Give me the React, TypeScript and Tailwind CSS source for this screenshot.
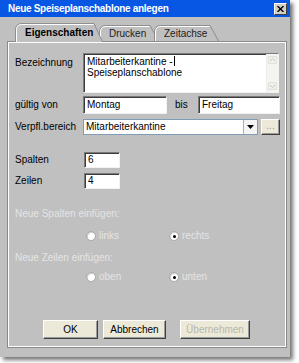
import React from "react";

function Tab({ label, width, selected, height }: { label: string; width: number; selected?: boolean; height: number }) {
  const w = width;
  const h = height;
  const d = `M0.5 ${h} L0.5 7 Q0.5 0.5 7 0.5 L${w - 9} 0.5 L${w - 0.5} ${h}`;
  const d2 = `M1.5 ${h} L1.5 7 Q1.5 1.5 7 1.5 L${w - 9.5} 1.5`;
  return (
    <div
      className={
        "relative shrink-0 flex items-center " +
        (selected ? "z-10 -mb-px font-bold text-black" : "text-[#222]")
      }
      style={{ width: w, height: h }}
    >
      <svg className="absolute inset-0" width={w} height={h} viewBox={`0 0 ${w} ${h}`}>
        <path d={d + " Z"} fill="#c0c0c0" stroke="none" />
        <path d={d} fill="none" stroke="#8e8e8e" strokeWidth="1" />
        <path d={d2} fill="none" stroke="#ffffff" strokeWidth="1" />
      </svg>
      <span className="relative pl-[10px] pt-[1px]">{label}</span>
    </div>
  );
}

function Radio({ checked, label }: { checked?: boolean; label: string }) {
  return (
    <div className="flex items-center gap-[3px] h-[12px]">
      <div className="w-[10px] h-[10px] rounded-full bg-white border border-[#a8a8a8] shadow-[inset_1px_1px_0_#d0d0d0] flex items-center justify-center">
        {checked && <div className="w-[3px] h-[3px] rounded-full bg-black" />}
      </div>
      <span className="text-[#e4e4e4]">{label}</span>
    </div>
  );
}

const sunken =
  "bg-white border border-t-[#7a7a7a] border-l-[#7a7a7a] border-r-[#f2f2f2] border-b-[#f2f2f2] shadow-[inset_1px_1px_0_#3c3c3c]";

const btn =
  "h-[19px] bg-[#ece9d8] border border-t-white border-l-white border-r-[#404040] border-b-[#404040] shadow-[inset_-1px_-1px_0_#9a9a9a] flex items-center justify-center";

export default function App() {
  return (
    <div className="w-[299px] h-[363px] bg-white overflow-hidden font-['Liberation_Sans',Arial,sans-serif] text-[10px] leading-[12px] text-black">
      <div className="w-[290px] h-[357px] bg-[#c0c0c0] shadow-[3px_3px_4px_rgba(0,0,0,0.55)] flex flex-col">
        {/* title bar */}
        <div className="h-[17px] bg-[#0856e4] flex items-center justify-between pl-[8px] pr-[3px]">
          <span className="text-white font-bold tracking-[-0.3px]">Neue Speiseplanschablone anlegen</span>
          <div className="w-[13px] h-[12px] bg-[#d4d0c8] border border-t-white border-l-white border-r-[#404040] border-b-[#404040] flex items-center justify-center">
            <svg width="7" height="6" viewBox="0 0 7 6">
              <path d="M0.5 0 L6.5 6 M6.5 0 L0.5 6" stroke="#000" strokeWidth="1.4" />
            </svg>
          </div>
        </div>

        {/* tabs */}
        <div className="pt-[6px] pl-[15px] h-[24px] flex items-end">
          <Tab label="Eigenschaften" width={88} height={19} selected />
          <div className="-ml-[4px] flex items-end">
            <Tab label="Drucken" width={60} height={16} />
            <div className="-ml-[5px]">
              <Tab label="Zeitachse" width={65} height={16} />
            </div>
          </div>
        </div>

        {/* panel */}
        <div className="ml-[7px] w-[280px] h-[307px] border border-[#8a8a8a] shadow-[inset_1px_1px_0_#fff,inset_-1px_-1px_0_#fff] flex flex-col pl-[7px] pt-[11px] pb-[8px]">
          {/* Bezeichnung */}
          <div className="flex">
            <div className="w-[68px] pt-[4px]">Bezeichnung</div>
            <div className={"w-[196px] h-[40px] flex " + sunken}>
              <div className="flex-1 pl-[3px] pt-[2px] leading-[11px]">
                <div>Mitarbeiterkantine -<span className="inline-block w-px h-[10px] bg-black align-[-1px] ml-px" /></div>
                <div>Speiseplanschablone</div>
              </div>
              <div className="w-[12px] bg-[#f4f4f0] flex flex-col justify-between items-center py-[2px] border-l border-[#ececec]">
                <svg width="9" height="8" viewBox="0 0 9 8">
                  <rect x="0.5" y="0.5" width="8" height="7" fill="#f0efe8" stroke="#e2e1da" />
                  <path d="M2 5 L4.5 2.5 L7 5" fill="none" stroke="#c8c8c8" />
                </svg>
                <svg width="9" height="8" viewBox="0 0 9 8">
                  <rect x="0.5" y="0.5" width="8" height="7" fill="#f0efe8" stroke="#e2e1da" />
                  <path d="M2 3 L4.5 5.5 L7 3" fill="none" stroke="#c8c8c8" />
                </svg>
              </div>
            </div>
          </div>

          {/* gültig von */}
          <div className="flex items-center mt-[3px]">
            <div className="w-[68px]">gültig von</div>
            <div className={"w-[84px] h-[18px] pl-[3px] flex items-center " + sunken}>Montag</div>
            <div className="w-[31px] pl-[8px]">bis</div>
            <div className={"w-[82px] h-[18px] pl-[3px] flex items-center " + sunken}>Freitag</div>
          </div>

          {/* Verpfl.bereich */}
          <div className="flex items-center mt-[5px]">
            <div className="w-[68px]">Verpfl.bereich</div>
            <div className="w-[175px] h-[16px] border border-[#7f9db9] bg-white flex">
              <div className="flex-1 pl-[2px] flex items-center">Mitarbeiterkantine</div>
              <div className="w-[14px] border-l border-[#9fb3c8] bg-[#f4f4f4] flex items-center justify-center">
                <svg width="7" height="4" viewBox="0 0 7 4">
                  <path d="M0 0 L7 0 L3.5 4 Z" fill="#000" />
                </svg>
              </div>
            </div>
            <div className={"ml-[3px] w-[19px] !h-[16px] text-[#9a9a9a] " + btn}>
              <span className="-mt-[3px]">...</span>
            </div>
          </div>

          {/* Spalten */}
          <div className="flex items-center mt-[17px]">
            <div className="w-[69px]">Spalten</div>
            <div className={"w-[36px] h-[16px] pl-[3px] flex items-center " + sunken}>6</div>
          </div>
          <div className="flex items-center mt-[5px]">
            <div className="w-[69px]">Zeilen</div>
            <div className={"w-[36px] h-[16px] pl-[3px] flex items-center " + sunken}>4</div>
          </div>

          <div className="mt-[19px] text-[#e4e4e4]">Neue Spalten einfügen:</div>
          <div className="flex mt-[10px] pl-[71px]">
            <div className="w-[83px]">
              <Radio label="links" />
            </div>
            <Radio label="rechts" checked />
          </div>

          <div className="mt-[10px] text-[#e4e4e4]">Neue Zeilen einfügen:</div>
          <div className="flex mt-[7px] pl-[71px]">
            <div className="w-[83px]">
              <Radio label="oben" />
            </div>
            <Radio label="unten" checked />
          </div>

          <div className="mt-auto flex pl-[28px]">
            <div className={"w-[55px] " + btn}>OK</div>
            <div className={"ml-[5px] w-[63px] " + btn}>Abbrechen</div>
            <div className={"ml-[14px] w-[70px] text-[#b8b6aa] " + btn}>Übernehmen</div>
          </div>
        </div>
      </div>
    </div>
  );
}
